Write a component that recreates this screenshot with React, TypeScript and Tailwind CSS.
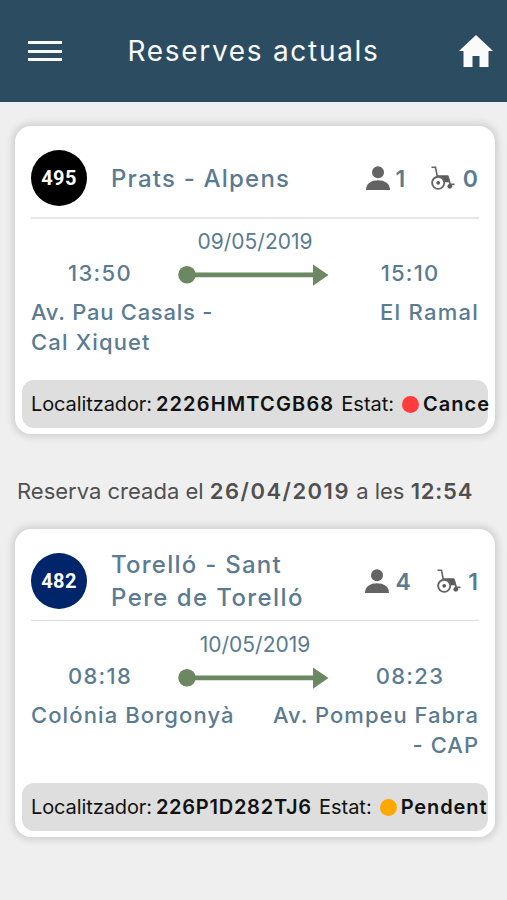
import { clsx } from "clsx";

// letter spacing is set for each text on its own
type Line = { text: string; tracking: string };

type Booking = {
    line: string;
    lineColor: string;
    divider: string;
    route: Line[];
    passengers: number;
    wheelchairs: number;
    date: string;
    departure: Line;
    arrival: Line;
    from: Line[];
    to: Line[];
    locator: Line;
    status: Line;
    statusColor: string;
};

const bookings: Booking[] = [
    {
        line: "495",
        lineColor: "bg-black",
        divider: "h-[93px] border-b-2 border-[#e6e6e6]",
        route: [{ text: "Prats - Alpens", tracking: "tracking-[1.2px]" }],
        passengers: 1,
        wheelchairs: 0,
        date: "09/05/2019",
        departure: { text: "13:50", tracking: "tracking-[1.3px]" },
        arrival: { text: "15:10", tracking: "tracking-[1.2px]" },
        from: [
            { text: "Av. Pau Casals -", tracking: "tracking-[0.75px]" },
            { text: "Cal Xiquet", tracking: "tracking-[1.15px]" },
        ],
        to: [{ text: "El Ramal", tracking: "tracking-[1.25px]" }],
        locator: { text: "2226HMTCGB68", tracking: "tracking-[1.15px]" },
        status: { text: "Cance", tracking: "tracking-[1px]" },
        statusColor: "bg-[#ff3b3b]",
    },
    {
        line: "482",
        lineColor: "bg-[#00256b]",
        divider: "h-[92px] mb-px border-b border-[#dcdcdc]",
        route: [
            { text: "Torelló - Sant", tracking: "tracking-[1.25px]" },
            { text: "Pere de Torelló", tracking: "tracking-[1.4px]" },
        ],
        passengers: 4,
        wheelchairs: 1,
        date: "10/05/2019",
        departure: { text: "08:18", tracking: "tracking-[1.3px]" },
        arrival: { text: "08:23", tracking: "tracking-[1.3px]" },
        from: [{ text: "Colónia Borgonyà", tracking: "tracking-[1.1px]" }],
        to: [
            { text: "Av. Pompeu Fabra", tracking: "tracking-[1px]" },
            { text: "- CAP", tracking: "tracking-[1px]" },
        ],
        locator: { text: "226P1D282TJ6", tracking: "tracking-[0.75px]" },
        status: { text: "Pendent", tracking: "tracking-[0.9px]" },
        statusColor: "bg-[#ffa800]",
    },
];

function HomeIcon() {
    return (
        <svg width="34" height="33" viewBox="0 0 34 33" fill="#fafafa">
            <path d="M17 0 34 16H29.5V32H20.5V21H13.5V32H4.5V16H0Z" />
        </svg>
    );
}

function PersonIcon() {
    return (
        <svg width="24" height="24" viewBox="0 0 24 24" fill="#636363">
            <circle cx="12" cy="6.2" r="6" />
            <path d="M0 24C0 17.5 5.2 14.2 12 14.2S24 17.5 24 24Z" />
        </svg>
    );
}

function WheelchairIcon() {
    return (
        <svg width="24" height="24" viewBox="0 0 24 24" fill="none" stroke="#666">
            <path d="M0.5 1.3H4.5L6.3 10.5" strokeWidth="1.6" />
            <path d="M5.8 9.3H17.2L19 16.2H13.8C12.8 13 10 11 5.8 11Z" fill="#5c5c5c" stroke="none" />
            <path d="M17 10.5 19.2 18.3H23.5" strokeWidth="1.7" />
            <circle cx="7.2" cy="16.8" r="6.1" strokeWidth="1.9" />
            <circle cx="7.2" cy="16.8" r="1.9" fill="#5c5c5c" stroke="none" />
            <circle cx="18.8" cy="20.3" r="2.4" fill="#5c5c5c" stroke="none" />
        </svg>
    );
}

function RouteArrow() {
    return (
        <svg width="152" height="22" viewBox="0 0 152 22" fill="#6b8862">
            <circle cx="9" cy="10.7" r="8.8" />
            <path d="M10 8.4H135V0.5L150.5 11 135 21.7V13.2H10Z" />
        </svg>
    );
}

function Lines({ lines }: { lines: Line[] }) {
    return lines.map(({ text, tracking }) => (
        <span key={text} className={clsx("block", tracking)}>{text}</span>
    ));
}

function BookingCard({ booking }: { booking: Booking }) {
    const { departure, arrival, locator, status } = booking;

    return (
        <article className="h-[308px] rounded-2xl bg-white px-[7px] pb-1.5 flex flex-col shadow-[0_0_7px_3px_rgba(0,0,0,0.13)]">
            <header className={clsx("mx-[9px] shrink-0 pt-[15px] pb-[2px] flex items-center", booking.divider)}>
                <div
                    className={clsx(
                        "size-14 shrink-0 rounded-full flex items-center justify-center text-white font-['Roboto',sans-serif] font-bold text-xl tracking-[0.3px]",
                        booking.lineColor
                    )}
                >
                    {booking.line}
                </div>
                <h2 className="ml-6 flex-1 whitespace-nowrap text-2xl leading-[33px] font-medium">
                    <Lines lines={booking.route} />
                </h2>
                <div className="mr-px flex items-center text-[23px] font-semibold">
                    <PersonIcon />
                    <span className="ml-1.5 mr-[26px] pt-0.5">{booking.passengers}</span>
                    <WheelchairIcon />
                    <span className="ml-[7.5px] pt-0.5">{booking.wheelchairs}</span>
                </div>
            </header>

            <p className="mt-2 text-center text-[21px] leading-[30px]">{booking.date}</p>

            <div className="mx-[9px] h-8 grid grid-cols-[138px_1fr_138px] items-center text-[22px] font-medium">
                <span className={clsx("text-center", departure.tracking)}>{departure.text}</span>
                <span className="pl-[9px] pt-0.5">
                    <RouteArrow />
                </span>
                <span className={clsx("text-center", arrival.tracking)}>{arrival.text}</span>
            </div>

            <div className="mx-[9px] mt-2 flex justify-between whitespace-nowrap text-[22px] leading-[30px] font-medium">
                <p>
                    <Lines lines={booking.from} />
                </p>
                <p className="text-right">
                    <Lines lines={booking.to} />
                </p>
            </div>

            <footer className="mt-auto h-12 rounded-xl bg-[#dedede] pl-[9px] flex items-center whitespace-nowrap text-xl text-[#111]">
                <span className="tracking-[-0.1px]">Localitzador:</span>
                <b className={clsx("ml-1 font-semibold", locator.tracking)}>{locator.text}</b>
                <span className="ml-[7px]">Estat:</span>
                <span className={clsx("ml-2 size-[17px] shrink-0 rounded-full", booking.statusColor)} />
                <b className={clsx("ml-1 font-semibold", status.tracking)}>{status.text}</b>
            </footer>
        </article>
    );
}

export default function App() {
    return (
        <div className="h-[900px] w-[507px] overflow-hidden bg-[#efefef] font-['Inter',sans-serif] text-[#5a7b92]">
            <header className="h-[102px] bg-[#2c4d61] pl-7 pr-3.5 flex items-center justify-between text-[#fafafa]">
                <div className="w-[34px] flex flex-col gap-[5.5px]">
                    <span className="h-[3px] bg-[#fafafa]" />
                    <span className="h-[3px] bg-[#fafafa]" />
                    <span className="h-[3px] bg-[#fafafa]" />
                </div>
                <h1 className="mr-3.5 text-[28px] tracking-[1.7px]">Reserves actuals</h1>
                <HomeIcon />
            </header>

            <main className="pl-[15px] pr-3 pt-6">
                <BookingCard booking={bookings[0]} />
                <p className="h-[95px] pl-[2px] pt-[41px] whitespace-nowrap text-[22px] leading-8 text-[#505050]">
                    <span>Reserva creada el </span>
                    <b className="font-semibold tracking-[1.5px]">26/04/2019</b>
                    <span> a les </span>
                    <b className="font-semibold tracking-[0.8px]">12:54</b>
                </p>
                <BookingCard booking={bookings[1]} />
            </main>
        </div>
    );
}
